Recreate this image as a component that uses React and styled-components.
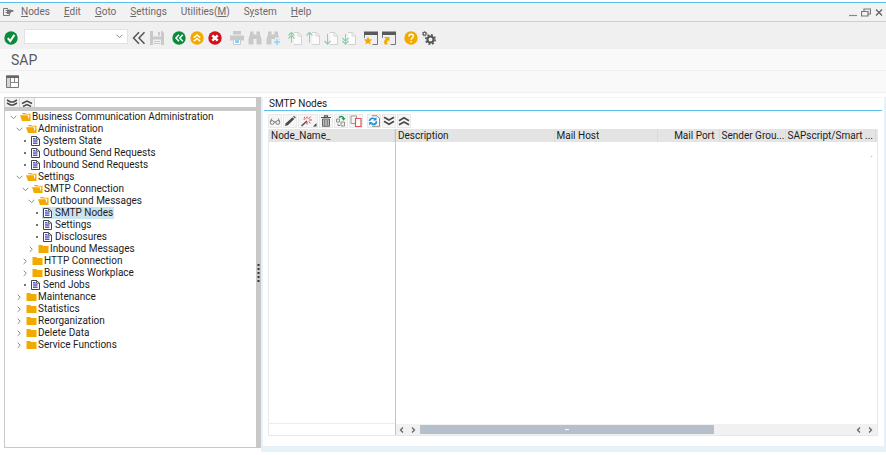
import React from 'react';
import styled, {createGlobalStyle, css} from 'styled-components';

const colors = {
  text: '#1c1c1c',
  menu: '#6a6a6a',
  line: '#cfcfcf',
  bar: '#c8c8c8',
  blue: '#5cc0ea',
  folder: '#f2a900',
  off: '#c9c9c9',
};

const fontSize = {
  base: '10px',
  title: '14px',
};

const GlobalStyle = createGlobalStyle`
  * {
    box-sizing: border-box;
  }
  body {
    margin: 0;
    background: #fff;
    color: ${colors.text};
    font-family: Roboto, "Liberation Sans", sans-serif;
    font-size: ${fontSize.base};
    line-height: 12px;
  }
  button, input {
    font: inherit;
    color: inherit;
  }
  svg {
    display: block;
  }
`;

const Page = styled.div`
  display: flex;
  flex-direction: column;
  min-height: 100vh;
  padding-top: 2px;
`;

const PlainButton = styled.button`
  padding: 0;
  border: none;
  background: none;
`;

const MenuBar = styled.nav`
  display: flex;
  align-items: center;
  gap: 14px;
  height: 20px;
  padding: 0 2px 0 3px;
  border-top: 1px solid ${colors.blue};
  border-bottom: 1px solid ${colors.line};
  background: #f2f2f2;
  color: ${colors.menu};
`;

const MenuIcon = styled(PlainButton)`
  margin-right: -7px;
`;

const WindowButtons = styled.div`
  display: flex;
  gap: 3px;
  margin-left: auto;
`;

const Toolbar = styled.div`
  display: flex;
  align-items: center;
  gap: 8px;
  height: 27px;
  padding: 5px 4px 0;
  background: #f0f0f0;
`;

const ToolGroup = styled.div`
  display: flex;
  align-items: center;
  gap: 4px;
`;

const Command = styled.div`
  display: flex;
  align-items: center;
  width: 104px;
  height: 15px;
  margin: -4px 0 0 2px;
  padding-right: 4px;
  border: 1px solid #e2e2e2;
  background: #fff;
`;

const CommandInput = styled.input`
  flex: 1;
  min-width: 0;
  height: 12px;
  padding: 0 3px;
  border: none;
  outline: none;
  background: none;
`;

const TitleBar = styled.h1`
  height: 22px;
  margin: 0;
  padding: 0 11px;
  border-bottom: 1px solid #efefef;
  background: #f9f9f9;
  color: #5a5a5a;
  font-size: ${fontSize.title};
  font-weight: normal;
  line-height: 22px;
`;

const AppBar = styled.div`
  display: flex;
  align-items: center;
  height: 22px;
  padding: 0 6px;
  border-bottom: 1px solid #f0f0f0;
  background: #f9f9f9;
`;

const Body = styled.main`
  display: flex;
  flex: 1;
  padding-top: 4px;
`;

const Side = styled.aside`
  display: flex;
  flex-direction: column;
  flex: 0 0 252px;
  margin: 0 0 7px 4px;
  border: 1px solid ${colors.bar};
  border-right: none;
`;

const SideTools = styled.div`
  display: flex;
  height: 9px;
`;

const SideTool = styled(PlainButton)`
  width: 15px;
  height: 9px;
  overflow: hidden;
  border-right: 1px solid #d4d4d4;
  background: #f2f2f2;
`;

const Tree = styled.ul`
  flex: 1;
  margin: 0;
  padding: 0 0 0 5px;
  border-top: 4px solid ${colors.bar};
  list-style: none;
`;

const TreeRow = styled.li`
  display: flex;
  align-items: center;
  height: 12px;
  padding-left: ${props => props.$level * 6}px;
`;

const Marker = styled.span`
  flex: none;
  width: ${props => (props.$leaf ? '8px' : '10px')};
  padding-left: ${props => (props.$leaf ? '1px' : '0')};
`;

const TreeItem = styled(PlainButton)`
  display: flex;
  align-items: center;
  gap: 1px;
  height: 12px;
  white-space: nowrap;
  ${props => props.$leaf && css`
    gap: 3px;
    padding: 0 1px;
  `}
  ${props => props.$selected && css`
    background: #cbe5f0;
  `}
`;

const Splitter = styled.div`
  display: flex;
  align-items: center;
  justify-content: center;
  width: 5px;
  margin-bottom: 7px;
  background: ${colors.bar};
`;

const Content = styled.section`
  display: flex;
  flex-direction: column;
  flex: 1;
  min-width: 0;
  margin-bottom: 3px;
  padding: 0 2px 0 1px;
  border: solid #e6f2f8;
  border-width: 0 2px 6px 2px;
`;

const ContentTitle = styled.h2`
  margin: 0;
  padding: 0 5px;
  border-top: 1px solid #f3f3f3;
  border-bottom: 1px solid ${colors.blue};
  font-size: ${fontSize.base};
  font-weight: normal;
  line-height: 12px;
`;

const GridTools = styled.div`
  display: flex;
  gap: 1px;
  padding: 3px 4px 1px;
`;

const GridTool = styled(PlainButton)`
  display: flex;
  align-items: center;
  justify-content: center;
  width: ${props => (props.$wide ? '20px' : '14px')};
  height: 14px;
  margin-right: ${props => (props.$gap ? '3px' : '0')};
  border: 1px solid #e9e9e9;
  background: #f6f6f6;
`;

const Grid = styled.div`
  display: flex;
  flex: 1;
  margin: 0 4px 10px 4px;
  border: 1px solid #e8e8e8;
  border-top: none;
`;

const Pane = styled.div`
  display: flex;
  flex-direction: column;
  justify-content: space-between;
  flex: ${props => (props.$frozen ? '0 0 127px' : '1')};
  min-width: 0;
  border-right: ${props => (props.$frozen ? '1px solid #c4c4c4' : 'none')};
`;

const Table = styled.table`
  width: 100%;
  border-collapse: collapse;
  table-layout: fixed;
`;

const HeadCell = styled.th`
  width: ${props => props.$width || 'auto'};
  height: 13px;
  padding: 0 ${props => (props.$right ? '4px' : '0')} 0 2px;
  border-right: 1px solid #dadada;
  background: #e4e4e4;
  font-weight: normal;
  line-height: 13px;
  text-align: ${props => (props.$right ? 'right' : 'left')};
  white-space: nowrap;
`;

const EdgeCell = styled.td`
  width: 2px;
  padding: 0;
  background: #e4e4e4;
`;

const Cell = styled.td`
  height: 24px;
  padding: 0 4px;
  color: #9aa5b0;
  text-align: right;
`;

const Red = styled.span`
  color: #e0202c;
`;

const FrozenFooter = styled.div`
  height: 12px;
  border-top: 1px solid #ececec;
`;

const ScrollBar = styled.div`
  display: flex;
  align-items: center;
  height: 11px;
  background: #f1f1f1;
`;

const ScrollTrack = styled.div`
  flex: 1;
  height: 9px;
`;

const ScrollThumb = styled.div`
  display: flex;
  align-items: center;
  justify-content: center;
  width: 68%;
  height: 9px;
  background: #b6c0cb;
`;

const ThumbGrip = styled.span`
  width: 4px;
  height: 1px;
  background: #fff;
`;

const ArrowButton = styled(PlainButton)`
  padding: 0 4px 0 3px;
`;

function Icon({size = 14, width, children, ...rest}) {
  return (
    <svg width={width || size} height={size} viewBox={`0 0 ${width || size} ${size}`} fill="none" {...rest}>
      {children}
    </svg>
  );
}

const CheckIcon = () => (
  <Icon>
    <circle cx="7" cy="7" r="6.7" fill="#0a8a3c" />
    <path d="M3.8 7.2l2.4 2.9 4.2-6.2" stroke="#fff" strokeWidth="2" />
  </Icon>
);

const BackIcon = () => (
  <Icon>
    <path d="M7 1.200L1.500 7 7 12.800M12.500 1.200L7 7l5.500 5.800" stroke="#555" strokeWidth="1.500" />
  </Icon>
);

const SaveIcon = () => (
  <Icon>
    <path d="M0 0h12l2 2v12H0z" fill={colors.off} />
    <path d="M3 0h8v5.500H3zM3 8.500h8V14H3z" fill="#f0f0f0" />
    <path d="M8 1h2v3.500H8zM4 10h6v1H4zM4 12h6v1H4z" fill={colors.off} />
  </Icon>
);

const CircleIcon = ({fill, d, bold}) => (
  <Icon>
    <circle cx="7" cy="7" r="6.7" fill={fill} />
    <path d={d} stroke="#fff" strokeWidth={bold ? 2.4 : 1.5} />
  </Icon>
);

const PrintIcon = () => (
  <Icon>
    <path d="M3 0h8v3.500H3z" fill={colors.off} />
    <path d="M0 4.500h14v5h-3V8H3v1.500H0z" fill={colors.off} />
    <path d="M3.500 8.500h7v5h-7z" fill="#fff" stroke={colors.off} />
    <path d="M5 9h4v3H5z" fill="#8fd0f5" />
  </Icon>
);

const FindIcon = ({plus}) => (
  <Icon>
    <path d="M2 .5h3.500v3h3v-3H12v3l1.500 4.500v5.500H8.500V8h-3v5.500H.5V8L2 3.500z" fill={colors.off} />
    {plus && <path d="M11 6.500V14M7 11h7" stroke="#f0f0f0" strokeWidth="4" />}
    {plus && <path d="M11 8v6M8 11h6" stroke="#8fd0f5" strokeWidth="1.500" />}
  </Icon>
);

const PageIcon = ({down, twice}) => (
  <Icon>
    <path d="M6 1.500h4.500L13.500 4.500v9H6" fill="#fbfbfb" stroke="#d2d2d2" />
    <path d="M10 1.500v3.500h3.500" stroke="#d2d2d2" />
    <path d={down ? 'M3.500 3v10' : 'M3.500 11.500v-10'} stroke="#8fcfa8" />
    <path d={down ? 'M0.500 10l3 3.200 3-3.200' : 'M0.500 4.500l3-3.200 3 3.200'} stroke="#8fcfa8" strokeWidth="1.200" />
    {twice && <path d={down ? 'M0.500 7l3 3.200 3-3.200' : 'M0.500 7.500l3-3.200 3 3.200'} stroke="#8fcfa8" strokeWidth="1.200" />}
  </Icon>
);

const SessionIcon = ({shortcut}) => (
  <Icon>
    <path d="M0 0.500h14v3.500H0z" fill="#5a5a5a" />
    <path d="M0.500 4v3M8.500 13.500h5V4" stroke="#777" />
    {shortcut
      ? <path d="M2 6h5.500v4.500L6 9.200C4.800 10.300 4.800 12 6 13.500H2.800C1.500 11.500 2 9.500 3.800 7.800z" fill={colors.folder} />
      : <path d="M4 5.500l1.200 2.800 3.100.3-2.300 2 .7 3L4 12l-2.700 1.600.7-3-2.300-2 3.100-.3z" fill={colors.folder} />}
  </Icon>
);

const HelpIcon = () => (
  <Icon>
    <circle cx="7" cy="7" r="6.7" fill="#f2a900" />
    <path d="M4.800 5.400c0-3 4.600-2.900 4.600-.2 0 1.600-2.300 1.600-2.300 3.600M7.100 9.900v1.600" stroke="#fff" strokeWidth="1.500" />
  </Icon>
);

const GearIcon = () => (
  <Icon>
    <circle cx="8.500" cy="8.500" r="3" stroke="#555" strokeWidth="2" />
    <circle cx="8.500" cy="8.500" r="4.600" stroke="#555" strokeWidth="1.800" strokeDasharray="1.800 1.812" />
    <circle cx="2.600" cy="2.800" r="1.500" stroke="#555" strokeWidth="1.100" />
    <circle cx="2.600" cy="2.800" r="2.300" stroke="#555" strokeDasharray="0.900 0.906" />
  </Icon>
);

const LayoutIcon = () => (
  <Icon size={13}>
    <path d="M0.500 1h12v11.500H0.500z" fill="#fff" stroke="#777" />
    <path d="M0 0.500h13V3H0z" fill="#666" />
    <path d="M4.500 3v9.500M8.500 3v5M5 7.500h7.500" stroke="#888" />
    <path d="M1 3h3v9H1z" fill="#d5d5d5" />
  </Icon>
);

const WindowMenuIcon = () => (
  <Icon size={9} width={11}>
    <path d="M5 .5H.5v7h6V6" stroke="#777" />
    <path d="M2.500 2.500h3M2.500 4.500h4" stroke="#777" />
    <path d="M4 1.500h3l3.500.800v1.200L8 4.200 7 6H4z" fill="#777" />
  </Icon>
);

const ChevronDown = () => (
  <Icon size={5} width={7}>
    <path d="M.7.800l2.800 2.900L6.300.800" stroke="#8a8a8a" />
  </Icon>
);

const ChevronRight = () => (
  <Icon size={7} width={6}>
    <path d="M1.700.700l2.600 2.600-2.600 2.600" stroke="#8a8a8a" />
  </Icon>
);

const Dot = () => (
  <Icon size={4} width={4}>
    <circle cx="2" cy="2" r="1" fill="#444" />
  </Icon>
);

const FolderIcon = ({open}) => (
  <Icon size={10} width={11}>
    {open
      ? <path d="M2.300 2.300V1h3l.8.800h4.400V9H2L0 3.200h7.500L9 7.500l.3-4.700z" fill={colors.folder} />
      : <path d="M0.500 1h3.700l1 1h5.300v7H0.500z" fill={colors.folder} />}
  </Icon>
);

const DocIcon = () => (
  <Icon size={10} width={9}>
    <path d="M.5.500h5L8.500 3.200v6.300h-8z" fill="#fff" stroke="#444" />
    <path d="M5.500.500v2.700h3" stroke="#444" strokeWidth=".8" />
    <path d="M2 2.500h2.500M2 4.200h4.500M2 5.800h4.500M2 7.500h4.500" stroke="#5a55c8" strokeWidth="1.200" />
  </Icon>
);

const DoubleArrow = ({up}) => (
  <Icon size={10} width={12}>
    <path
      d={up ? 'M1 4.700l5-2.900 5 2.900M1 8.800l5-2.900 5 2.900' : 'M1 1.200l5 2.900 5-2.900M1 5.300l5 2.900 5-2.900'}
      stroke="#4a4a4a"
      strokeWidth="1.700"
    />
  </Icon>
);

const SideArrow = ({up}) => (
  <Icon size={9} width={14}>
    <path
      d={up ? 'M2 5.500l5-2.500 5 2.500M3 8.500l4-2 4 2' : 'M2 2l3.500 2h3L12 2M2 5l3.500 2h3L12 5'}
      stroke="#4a4a4a"
      strokeWidth="1.500"
    />
  </Icon>
);

const GlassesIcon = () => (
  <Icon size={12} width={12}>
    <circle cx="3.200" cy="7.500" r="1.900" stroke="#777" />
    <circle cx="8.800" cy="7.500" r="1.900" stroke="#777" />
    <path d="M5 7.200q1-.8 2 0M1.400 6.500l1.400-3M10.600 6.500l-1.400-3" stroke="#777" />
  </Icon>
);

const PencilIcon = () => (
  <Icon size={12}>
    <path d="M1 11l.8-2.700L8.500 2.200l1.800 1.800-6.500 6.200z" fill="#4a4a4a" />
    <path d="M9.200 1.500l.8-.7 1.800 1.800-.8.800z" fill="#4a4a4a" />
  </Icon>
);

const WandIcon = () => (
  <Icon size={12} width={17}>
    <path d="M1.500 11l5.500-5" stroke="#555" strokeWidth="1.600" />
    <path d="M7 1.500v2.200M7 7v2.500M3.500 4h2M9 5h3M8.500 3.800l2.300-2.300M4 1.800l1.300 1.200M8.700 6.500l1.800 1.800" stroke="#d8404a" />
    <path d="M16.500 8v3.500H13z" fill="#444" />
  </Icon>
);

const TrashIcon = () => (
  <Icon size={12} width={10}>
    <path d="M0 2.500h10M3.500 2V.8h3V2" stroke="#555" strokeWidth="1.200" />
    <path d="M1.500 4h7v7.300h-7z" fill="#bbb" stroke="#666" />
    <path d="M3.700 5v5.500M6.300 5v5.500" stroke="#666" strokeWidth=".8" />
  </Icon>
);

const SortIcon = () => (
  <Icon size={12}>
    <path d="M1.500 4h3v3h-3zM6 7h3.500v4H6z" fill="#eee" stroke="#888" strokeWidth=".9" />
    <path d="M4 2.500C5.500.800 8 1.200 8.500 3" stroke="#1d9a50" strokeWidth="1.500" />
    <path d="M6.500 3h4L8.700 5.800z" fill="#1d9a50" />
    <path d="M3 8.500v2h2" stroke="#888" />
  </Icon>
);

const CopyIcon = () => (
  <Icon size={12}>
    <path d="M1 1h5.500v7.500H1z" stroke="#999" />
    <path d="M5.500 3.500h5.500v8H5.500z" fill="#fff" stroke="#e2545c" strokeWidth="1.200" />
  </Icon>
);

const RefreshIcon = () => (
  <Icon size={12}>
    <path d="M4 .8h5l2.500 2.500v8H4" fill="#fff" stroke="#888" />
    <path d="M1.500 6C1.700 3.500 4.800 2.300 6.800 4.200M8.500 6.300c0 2.900-3 3.900-5 2.200" stroke="#1d8fd8" strokeWidth="1.700" />
    <path d="M5 5.500L8.500 5.500V2zM4.800 7L1.300 7v3.500z" fill="#1d8fd8" />
  </Icon>
);

const menus = [
  ['', 'N', 'odes'],
  ['', 'E', 'dit'],
  ['', 'G', 'oto'],
  ['', 'S', 'ettings'],
  ['Utilities(', 'M', ')'],
  ['S', 'y', 'stem'],
  ['', 'H', 'elp'],
];

const toolGroups = [
  [
    ['Back', <CircleIcon fill="#0a8a3c" d="M7 3.800L4 7l3 3.200M10.800 3.800L7.800 7l3 3.200" />],
    ['Exit', <CircleIcon fill="#f2a900" d="M3.800 6.700L7 3.900l3.200 2.800M3.800 10.300L7 7.500l3.200 2.800" />],
    ['Cancel', <CircleIcon fill="#d0101c" d="M4.300 4.300l5.400 5.400M9.700 4.300L4.300 9.700" bold />],
  ],
  [
    ['Print', <PrintIcon />],
    ['Find', <FindIcon />],
    ['Find next', <FindIcon plus />],
  ],
  [
    ['First page', <PageIcon twice />],
    ['Previous page', <PageIcon />],
    ['Next page', <PageIcon down />],
    ['Last page', <PageIcon down twice />],
  ],
  [
    ['New session', <SessionIcon />],
    ['Create shortcut', <SessionIcon shortcut />],
  ],
  [
    ['Help', <HelpIcon />],
    ['Customize', <GearIcon />],
  ],
];

const tree = [
  {label: 'Business Communication Administration', level: 0, type: 'open'},
  {label: 'Administration', level: 1, type: 'open'},
  {label: 'System State', level: 2, type: 'leaf'},
  {label: 'Outbound Send Requests', level: 2, type: 'leaf'},
  {label: 'Inbound Send Requests', level: 2, type: 'leaf'},
  {label: 'Settings', level: 1, type: 'open'},
  {label: 'SMTP Connection', level: 2, type: 'open'},
  {label: 'Outbound Messages', level: 3, type: 'open'},
  {label: 'SMTP Nodes', level: 4, type: 'leaf', selected: true},
  {label: 'Settings', level: 4, type: 'leaf'},
  {label: 'Disclosures', level: 4, type: 'leaf'},
  {label: 'Inbound Messages', level: 3, type: 'closed'},
  {label: 'HTTP Connection', level: 2, type: 'closed'},
  {label: 'Business Workplace', level: 2, type: 'closed'},
  {label: 'Send Jobs', level: 2, type: 'leaf'},
  {label: 'Maintenance', level: 1, type: 'closed'},
  {label: 'Statistics', level: 1, type: 'closed'},
  {label: 'Reorganization', level: 1, type: 'closed'},
  {label: 'Delete Data', level: 1, type: 'closed'},
  {label: 'Service Functions', level: 1, type: 'closed'},
];

const gridTools = [
  {label: 'Display', icon: <GlassesIcon />},
  {label: 'Change', icon: <PencilIcon />},
  {label: 'Wizard', icon: <WandIcon />, wide: true},
  {label: 'Delete', icon: <TrashIcon />},
  {label: 'Rename', icon: <SortIcon />},
  {label: 'Copy', icon: <CopyIcon />, gap: true},
  {label: 'Refresh', icon: <RefreshIcon />},
  {label: 'Expand', icon: <DoubleArrow />},
  {label: 'Collapse', icon: <DoubleArrow up />},
];

function ScrollArrow({label, right}) {
  return (
    <ArrowButton aria-label={label}>
      <Icon size={6} width={5}>
        <path d={right ? 'M1 .500L3.500 3 1 5.500' : 'M4 .500L1.500 3 4 5.500'} stroke="#666" strokeWidth="1.300" />
      </Icon>
    </ArrowButton>
  );
}

function TreeNode({label, level, type, selected}) {
  const leaf = type === 'leaf';
  return (
    <TreeRow $level={level}>
      <Marker $leaf={leaf}>
        {leaf && <Dot />}
        {type === 'open' && <ChevronDown />}
        {type === 'closed' && <ChevronRight />}
      </Marker>
      <TreeItem $leaf={leaf} $selected={selected}>
        {leaf ? <DocIcon /> : <FolderIcon open={type === 'open'} />}
        {label}
      </TreeItem>
    </TreeRow>
  );
}

function NodesGrid() {
  return (
    <Grid>
      <Pane $frozen>
        <Table>
          <thead>
            <tr>
              <HeadCell>Node<Red>_</Red>Name<Red>_</Red></HeadCell>
            </tr>
          </thead>
        </Table>
        <FrozenFooter />
      </Pane>
      <Pane>
        <Table>
          <thead>
            <tr>
              <HeadCell>Description</HeadCell>
              <HeadCell $width="103px">Mail Host</HeadCell>
              <HeadCell $width="62px" $right>Mail Port</HeadCell>
              <HeadCell $width="66px">Sender Grou...</HeadCell>
              <HeadCell $width="90px">SAPscript/Smart ...</HeadCell>
              <EdgeCell />
            </tr>
          </thead>
          <tbody>
            <tr>
              <Cell colSpan={6}>.</Cell>
            </tr>
          </tbody>
        </Table>
        <ScrollBar>
          <ScrollArrow label="Scroll left" />
          <ScrollArrow label="Scroll right" right />
          <ScrollTrack>
            <ScrollThumb>
              <ThumbGrip />
            </ScrollThumb>
          </ScrollTrack>
          <ScrollArrow label="Scroll left" />
          <ScrollArrow label="Scroll right" right />
        </ScrollBar>
      </Pane>
    </Grid>
  );
}

export default function App() {
  return (
    <Page>
      <GlobalStyle />
      <MenuBar>
        <MenuIcon aria-label="Window menu"><WindowMenuIcon /></MenuIcon>
        {menus.map(([before, key, after]) => (
          <PlainButton key={before + key}>{before}<u>{key}</u>{after}</PlainButton>
        ))}
        <WindowButtons>
          <PlainButton aria-label="Minimize">
            <Icon size={9} width={10}><path d="M1 7.500h8" stroke="#888" strokeWidth="1.200" /></Icon>
          </PlainButton>
          <PlainButton aria-label="Restore">
            <Icon size={9} width={10}>
              <path d="M3 3V1h6.500v5H7.500M.5 3.500h6.500v4.500H.5z" stroke="#777" strokeWidth="1.200" />
            </Icon>
          </PlainButton>
          <PlainButton aria-label="Close">
            <Icon size={9} width={10}><path d="M2 1.500l6 6M8 1.500l-6 6" stroke="#666" strokeWidth="1.400" /></Icon>
          </PlainButton>
        </WindowButtons>
      </MenuBar>
      <Toolbar>
        <ToolGroup>
          <PlainButton aria-label="Enter"><CheckIcon /></PlainButton>
          <Command>
            <CommandInput aria-label="Command" />
            <PlainButton aria-label="Command history"><ChevronDown /></PlainButton>
          </Command>
          <PlainButton aria-label="Hide command field"><BackIcon /></PlainButton>
          <PlainButton aria-label="Save"><SaveIcon /></PlainButton>
        </ToolGroup>
        {toolGroups.map((group, i) => (
          <ToolGroup key={i}>
            {group.map(([label, icon]) => (
              <PlainButton key={label} aria-label={label}>{icon}</PlainButton>
            ))}
          </ToolGroup>
        ))}
      </Toolbar>
      <TitleBar>SAP</TitleBar>
      <AppBar>
        <PlainButton aria-label="Layout"><LayoutIcon /></PlainButton>
      </AppBar>
      <Body>
        <Side>
          <SideTools>
            <SideTool aria-label="Expand all"><SideArrow /></SideTool>
            <SideTool aria-label="Collapse all"><SideArrow up /></SideTool>
          </SideTools>
          <Tree>
            {tree.map((node, i) => <TreeNode key={i} {...node} />)}
          </Tree>
        </Side>
        <Splitter>
          <Icon size={20} width={3}>
            <path d="M1.500 1v19" stroke="#333" strokeWidth="2" strokeDasharray="2 2" />
          </Icon>
        </Splitter>
        <Content>
          <ContentTitle>SMTP Nodes</ContentTitle>
          <GridTools>
            {gridTools.map(({label, icon, wide, gap}) => (
              <GridTool key={label} aria-label={label} $wide={wide} $gap={gap}>{icon}</GridTool>
            ))}
          </GridTools>
          <NodesGrid />
        </Content>
      </Body>
    </Page>
  );
}
